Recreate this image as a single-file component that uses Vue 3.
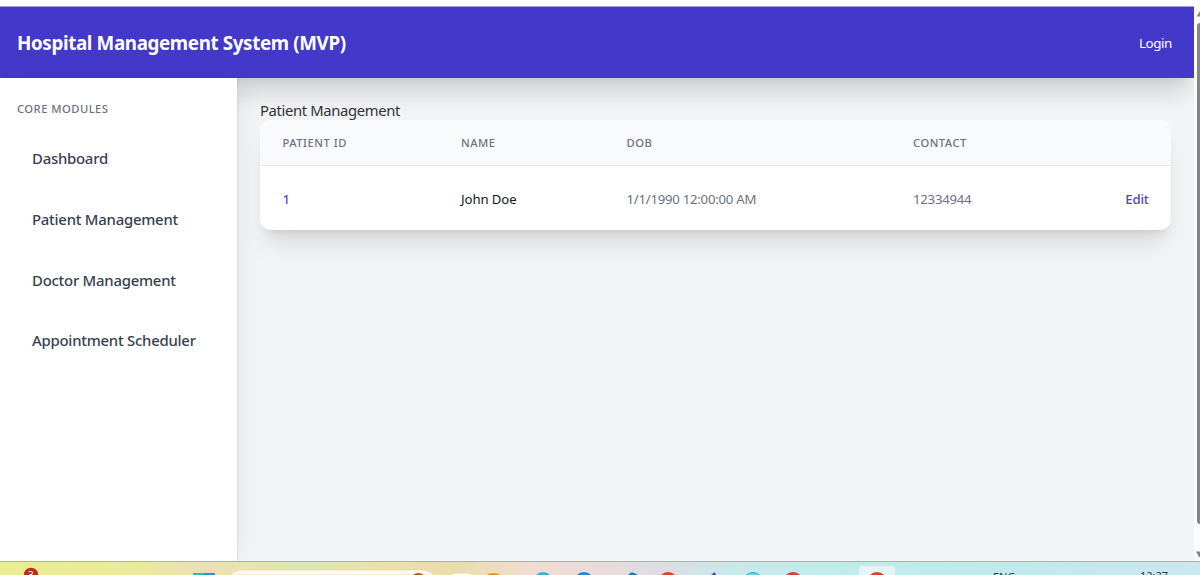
<template>
  <div class="screen">
    <div class="browser">
      <div class="page">
        <header class="navbar">
          <h1 class="brand">Hospital Management System (MVP)</h1>
          <a class="login">Login</a>
        </header>
        <div class="layout">
          <aside class="sidebar">
            <h3 class="sidebar-title">Core Modules</h3>
            <nav class="menu">
              <a v-for="item in modules" :key="item" class="menu-item">{{ item }}</a>
            </nav>
          </aside>
          <main class="content">
            <div class="content-title">Patient Management</div>
            <div class="card">
              <div class="row head">
                <span v-for="column in columns" :key="column">{{ column }}</span>
              </div>
              <div v-for="patient in patients" :key="patient.id" class="row body">
                <span class="patient-id">{{ patient.id }}</span>
                <span class="patient-name">{{ patient.name }}</span>
                <span class="patient-dob">{{ patient.dob }}</span>
                <span class="patient-contact">{{ patient.contact }}</span>
                <a class="edit">Edit</a>
              </div>
            </div>
          </main>
        </div>
      </div>
      <div class="scrollbar">
        <svg class="arrow" width="6" height="6" viewBox="0 0 6 6"><path d="M6 0 2.5 5.5H6z" fill="#858585" /></svg>
        <div class="thumb"></div>
        <svg class="arrow" width="6" height="6" viewBox="0 0 6 6"><path d="M2 0.5H6V6L5 6z" fill="#858585" /></svg>
      </div>
    </div>

    <footer class="taskbar">
      <svg class="taskbar-icons" width="960" height="13" viewBox="0 0 960 13">
        <circle cx="31" cy="13" r="7.3" fill="#bd2b1c" />
        <path d="M193 11h11v2h-11z" fill="#32b4cf" />
        <path d="M204 11h11v2h-11z" fill="#2697c8" />
        <path d="M230 13Q234 8 243 8H420Q429 8 434 13z" fill="#fffaf0" stroke="#e5d4b0" stroke-width="0.7" />
        <path d="M413 13Q418 9 424 13z" fill="#bf5420" />
        <path d="M452 13Q454 11.5 457 11.5H467Q470 11.5 472 13z" fill="#fffefa" />
        <path d="M487 13Q489 11.3 491 11.3H496Q498 11.5 500 13z" fill="#d69c18" />
        <circle cx="543" cy="20" r="10" fill="#35b6c5" />
        <circle cx="584" cy="20" r="10" fill="#2783d4" />
        <path d="M628 13 631 10.5H633L638 13z" fill="#1b79b5" />
        <circle cx="668" cy="20" r="10" fill="#d84234" />
        <path d="M711 13 714 10.5H715L716 13z" fill="#5e3e9f" />
        <circle cx="753" cy="20" r="9.5" fill="#70d1df" stroke="#2caebf" />
        <circle cx="793" cy="20" r="10" fill="#d84234" />
        <path d="M859 13V7Q859 4 862 4H891Q895 4 895 7V13z" fill="#e5f5f6" />
        <circle cx="877" cy="20" r="10" fill="#d84234" />
      </svg>
      <span class="badge">3</span>
      <span class="language">ENG</span>
      <span class="clock">12:27</span>
    </footer>
  </div>
</template>

<script setup>
/*------------------- DATA -------------------*/
const modules = ['Dashboard', 'Patient Management', 'Doctor Management', 'Appointment Scheduler']
const columns = ['Patient ID', 'Name', 'DOB', 'Contact']
const patients = [{ id: 1, name: 'John Doe', dob: '1/1/1990 12:00:00 AM', contact: '12334944' }]
</script>

<style>
body {
  margin: 0;
  overflow: hidden;
}
</style>

<style scoped>
.screen {
  width: 1200px;
  height: 575px;
  overflow: hidden;
  display: flex;
  flex-direction: column;
  background: #fff;
  font-family: 'Noto Sans', 'Open Sans', sans-serif;
}

.browser {
  height: 561px;
  flex-shrink: 0;
  display: flex;
}

.page {
  width: 1194px;
  border-top: 6px solid #fff;
  box-sizing: border-box;
  display: flex;
  flex-direction: column;
  overflow: hidden;
  background: #f3f4f6;
}

.navbar {
  height: 72px;
  flex-shrink: 0;
  padding: 0 22px 0 17px;
  box-sizing: border-box;
  border-top: 1px solid #a19be4;
  display: flex;
  align-items: center;
  justify-content: space-between;
  background: #4338ca;
  color: #fff;
  box-shadow: 0 20px 24px -5px rgba(0, 0, 0, 0.14), 0 8px 10px -6px rgba(0, 0, 0, 0.06);
}

.brand {
  margin: 0;
  font-size: 18.8px;
  font-weight: 700;
  line-height: 28px;
  letter-spacing: -0.37px;
}

.login {
  font-size: 13.4px;
  line-height: 20px;
  letter-spacing: -0.4px;
}

.layout {
  flex: 1;
  display: flex;
}

.sidebar {
  width: 237px;
  padding: 23px 17px;
  box-sizing: border-box;
  position: relative;
  background: #fff;
  box-shadow: 8px 0 23px -4px rgba(0, 0, 0, 0.06), 1px 0 2px rgba(0, 0, 0, 0.06);
}

.sidebar-title {
  margin: 0 0 19px;
  font-size: 11.2px;
  font-weight: 500;
  line-height: 16px;
  letter-spacing: 0.48px;
  text-transform: uppercase;
  color: #6b7280;
}

.menu {
  display: flex;
  flex-direction: column;
  gap: 15px;
}

.menu-item {
  padding: 11px 15px;
  font-size: 14.9px;
  font-weight: 500;
  line-height: 23.75px;
  letter-spacing: -0.24px;
  white-space: nowrap;
  color: #374151;
}

.content {
  flex: 1;
  padding: 22px 23px;
}

.content-title {
  height: 20px;
  font-size: 14.8px;
  line-height: 20px;
  letter-spacing: -0.36px;
  color: #303238;
}

.card {
  position: relative;
  border-radius: 11px;
  overflow: hidden;
  background: #fff;
  box-shadow: 0 19px 24px -5px rgba(0, 0, 0, 0.1), 0 8px 10px -6px rgba(0, 0, 0, 0.1);
}

.row {
  display: grid;
  grid-template-columns: 178.5px 165.5px 286.5px 1fr auto;
  align-items: center;
  padding: 0 22.5px;
}

.head {
  height: 45px;
  border-bottom: 1px solid #e5e7eb;
  background: #f9fafb;
  font-size: 11.2px;
  font-weight: 500;
  letter-spacing: 0.5px;
  text-transform: uppercase;
  color: #6b7280;
}

.body {
  height: 64px;
  padding-top: 2px;
  box-sizing: border-box;
  font-size: 13.2px;
  letter-spacing: -0.25px;
  color: #6b7280;
}

.patient-id {
  font-weight: 500;
  color: #5b50cf;
}

.patient-name {
  letter-spacing: -0.1px;
  color: #111827;
}

.edit {
  font-weight: 500;
  color: #4f46c5;
}

.scrollbar {
  width: 6px;
  display: flex;
  flex-direction: column;
  justify-content: space-between;
  padding: 11px 0 4px;
  box-sizing: border-box;
  background: #fcfcfc;
}

.arrow {
  display: block;
}

.thumb {
  height: 501px;
  margin: 6px 0 auto 3px;
  border-radius: 4px 0 0 4px;
  background: #858585;
}

.taskbar {
  height: 14px;
  box-sizing: border-box;
  position: relative;
  overflow: hidden;
  border-top: 1px solid #a9b2ad;
  background: linear-gradient(90deg, #e9ed94 0%, #ebea9c 12%, #ecdfb5 17%, #e6e6a8 21%, #dce8b6 25%, #ece2a5 32%, #eadcac 38%, #f1ddd0 44%, #e9dadb 50%, #dbdee3 56%, #c9e8ea 61%, #bfecea 70%, #c0eaeb 85%, #cae7ed 100%);
}

.taskbar-icons {
  display: block;
}

.badge,
.language,
.clock {
  position: absolute;
  line-height: 14px;
}

.badge {
  left: 28px;
  top: 6px;
  font-size: 10px;
  color: #fff;
}

.language {
  left: 993px;
  top: 8px;
  font-size: 11px;
  color: #26383c;
}

.clock {
  left: 1140px;
  top: 7px;
  font-size: 11px;
  color: #26383c;
}
</style>
